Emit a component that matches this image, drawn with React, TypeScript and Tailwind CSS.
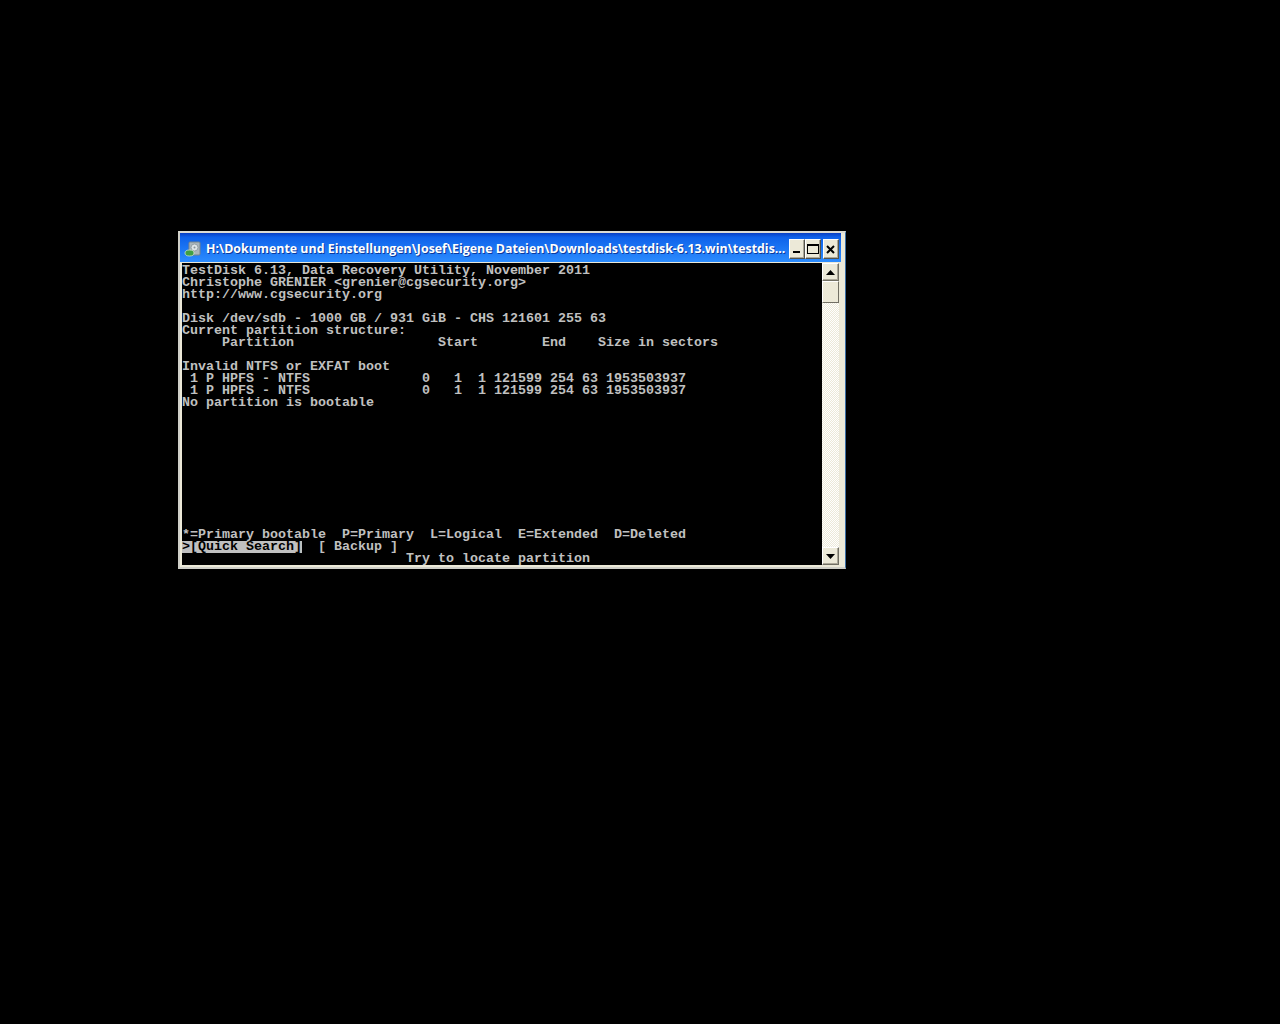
const LINES = [
  'TestDisk 6.13, Data Recovery Utility, November 2011',
  'Christophe GRENIER <grenier@cgsecurity.org>',
  'http://www.cgsecurity.org',
  '',
  'Disk /dev/sdb - 1000 GB / 931 GiB - CHS 121601 255 63',
  'Current partition structure:',
  '     Partition                  Start        End    Size in sectors',
  '',
  'Invalid NTFS or EXFAT boot',
  ' 1 P HPFS - NTFS              0   1  1 121599 254 63 1953503937',
  ' 1 P HPFS - NTFS              0   1  1 121599 254 63 1953503937',
  'No partition is bootable',
  '', '', '', '', '', '', '', '', '', '',
  '*=Primary bootable  P=Primary  L=Logical  E=Extended  D=Deleted',
]

function CaptionButton({ children }: { children: React.ReactNode }) {
  return (
    <div className="relative h-5 w-4 border border-t-white border-l-white border-r-[#55544c] border-b-[#55544c] bg-[#ece9d8] shadow-[inset_-1px_-1px_0_#aca899]">
      {children}
    </div>
  )
}

function ScrollButton({ up }: { up?: boolean }) {
  return (
    <div className="flex h-[18px] w-[17px] shrink-0 items-center justify-center border border-t-white border-l-white border-r-[#716f64] border-b-[#716f64] bg-[#ece9d8] shadow-[inset_-1px_-1px_0_#aca899]">
      <svg width="9" height="5" viewBox="0 0 9 5">
        <path d={up ? 'M4.5 0L9 5H0z' : 'M0 0h9L4.5 5z'} fill="#000" />
      </svg>
    </div>
  )
}

function AppIcon() {
  return (
    <svg width="17" height="17" viewBox="0 0 17 17" className="shrink-0">
      <rect x="5" y="1" width="11" height="13" rx="1" fill="#aab6bc" stroke="#76838a" />
      <circle cx="10.5" cy="6.5" r="3.5" fill="#dfe5e8" stroke="#87939a" strokeWidth="0.8" />
      <circle cx="10.5" cy="6.5" r="1" fill="#87939a" />
      <ellipse cx="5.5" cy="12" rx="4.5" ry="3" fill="#3f9f45" stroke="#d8ecd4" strokeWidth="0.7" />
    </svg>
  )
}

export default function App() {
  return (
    <div className="relative h-[1024px] w-full overflow-hidden bg-black">
      <div className="absolute left-[178px] top-[231px] flex h-[338px] w-[668px] flex-col border-t-2 border-l-2 border-r border-b-2 border-t-[#dcdcd4] border-l-[#cfcfc8] border-r-[#3a6ea5] border-b-[#cfcfc8] bg-[#ece9d8] pr-1">
        {/* title bar */}
        <div className="flex h-[29px] shrink-0 items-center bg-gradient-to-b from-[#0a3fc4] via-[#0f62ea] via-[15%] to-[#2c8cff] pl-1 pr-[2px] pt-[3px]">
          <AppIcon />
          <span className="ml-[5px] min-w-0 flex-1 whitespace-nowrap font-['Open_Sans',sans-serif] text-[12.4px] font-bold text-white [text-shadow:1px_1px_#0b3a9e]">
            H:\Dokumente und Einstellungen\Josef\Eigene Dateien\Downloads\testdisk-6.13.win\testdis...
          </span>
          <div className="flex shrink-0">
            <CaptionButton>
              <div className="absolute left-[3px] top-[11px] h-[2px] w-[7px] bg-black" />
            </CaptionButton>
            <CaptionButton>
              <div className="absolute left-[1px] top-[4px] h-[10px] w-3 border border-t-2 border-black" />
            </CaptionButton>
            <div className="ml-[2px]">
              <CaptionButton>
                <svg width="9" height="9" viewBox="0 0 9 9" className="absolute left-[2px] top-[5px]">
                  <path d="M1 1l7 7M8 1L1 8" stroke="#000" strokeWidth="2" />
                </svg>
              </CaptionButton>
            </div>
          </div>
        </div>
        {/* client area */}
        <div className="flex min-h-0 flex-1 bg-[#ece9d8] pb-[2px] pl-[2px] pr-[2px] pt-px">
          <div className="h-full w-[640px] overflow-hidden bg-black pt-[2px] font-['Liberation_Mono',monospace] text-[13.33px] font-bold leading-3 text-[#c0c0c0]">
            {LINES.map((line, i) => (
              <div key={i} className="h-3 whitespace-pre">
                {line}
              </div>
            ))}
            <div className="h-3 whitespace-pre">
              <span className="inline-block h-3 bg-[#c0c0c0] align-top text-black">&gt;[Quick Search]</span>
              {'  [ Backup ]'}
            </div>
            <div className="h-3 whitespace-pre">{'                            Try to locate partition'}</div>
          </div>
          <div className="flex w-[17px] flex-col bg-[repeating-conic-gradient(#ffffff_0_25%,#ece9d8_0_50%)] bg-[length:2px_2px]">
            <ScrollButton up />
            <div className="h-[22px] shrink-0 border border-t-white border-l-white border-r-[#716f64] border-b-[#716f64] bg-[#ece9d8]" />
            <div className="flex-1" />
            <ScrollButton />
          </div>
        </div>
      </div>
    </div>
  )
}
